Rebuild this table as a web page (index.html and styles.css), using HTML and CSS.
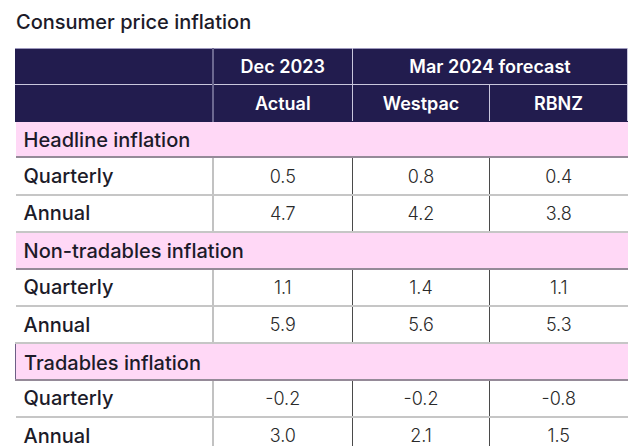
FILE: index.html
```html
<!DOCTYPE html>
<html>
<head>
<meta charset="utf-8">
<link rel="stylesheet" href="styles.css">
</head>
<body>
<div class="wrap">
  <h1 class="title">Consumer price inflation</h1>
  <table class="cpi">
    <colgroup>
      <col class="c-label"><col class="c-num"><col class="c-num"><col class="c-num">
    </colgroup>
    <thead>
      <tr class="h1row">
        <th class="blank"></th>
        <th class="first">Dec 2023</th>
        <th colspan="2" class="last">Mar 2024 forecast</th>
      </tr>
      <tr class="h2row">
        <th class="blank"></th>
        <th class="first">Actual</th>
        <th>Westpac</th>
        <th class="last">RBNZ</th>
      </tr>
    </thead>
    <tbody>
      <tr class="section"><td colspan="4">Headline inflation</td></tr>
      <tr class="data"><td class="label">Quarterly</td><td class="num first">0.5</td><td class="num">0.8</td><td class="num">0.4</td></tr>
      <tr class="data"><td class="label">Annual</td><td class="num first">4.7</td><td class="num">4.2</td><td class="num">3.8</td></tr>
      <tr class="section"><td colspan="4">Non-tradables inflation</td></tr>
      <tr class="data"><td class="label">Quarterly</td><td class="num first">1.1</td><td class="num">1.4</td><td class="num">1.1</td></tr>
      <tr class="data"><td class="label">Annual</td><td class="num first">5.9</td><td class="num">5.6</td><td class="num">5.3</td></tr>
      <tr class="section active"><td colspan="4">Tradables inflation</td></tr>
      <tr class="data"><td class="label">Quarterly</td><td class="num first">-0.2</td><td class="num">-0.2</td><td class="num">-0.8</td></tr>
      <tr class="data"><td class="label">Annual</td><td class="num first">3.0</td><td class="num">2.1</td><td class="num">1.5</td></tr>
    </tbody>
  </table>
</div>
</body>
</html>
```
FILE: styles.css
```css
html, body {
  margin: 0;
  padding: 0;
  background: #ffffff;
}
body {
  font-family: "Inter", "Liberation Sans", sans-serif;
  color: #1c1a2b;
  overflow: hidden;
}
.wrap {
  padding: 9px 4px 0 15px;
}
.title {
  margin: 0 0 0 1px;
  font-size: 20px;
  line-height: 26px;
  font-weight: 500;
  color: #1c1b29;
  height: 39px;
}
.cpi {
  width: 613px;
  border-collapse: collapse;
  table-layout: fixed;
}
.c-label { width: 197px; }
.c-num:nth-child(2) { width: 140px; }
.c-num:nth-child(3) { width: 137px; }
.cpi th, .cpi td {
  padding: 0;
}
thead th {
  background: #221c4e;
  color: #ffffff;
  font-size: 18px;
  font-weight: 600;
  text-align: center;
  border: 1px solid #c9c6dc;
  padding-top: 1px;
}
thead th.blank {
  border-left: 1px solid #221c4e;
  border-right: 2px solid #6c6890;
}
thead .h1row th { border-top: 1px solid #9d98bd; height: 35px; }
thead .h2row th { height: 36px; border-bottom: 1px solid #221c4e; }
.section td {
  background: #ffd8f6;
  font-size: 20px;
  font-weight: 500;
  color: #1c1b29;
  padding-left: 8px;
  padding-top: 2px;
  border-bottom: 2px solid #958a98;
  height: 32.4px;
}
.section.active td {
  border-top: 1px solid #6d5f86;
  border-left: 1px solid #6d5f86;
}
.data td {
  border-bottom: 2px solid #c6c6c6;
  height: 35.4px;
}
.data td.label {
  font-size: 20px;
  font-weight: 500;
  color: #1c1b29;
  padding-left: 8px;
  border-right: 2px solid #c2c2c2;
}
.data td.num {
  text-align: center;
  font-size: 18px;
  font-weight: 300;
  color: #2a2a2a;
  border-left: 1px solid #4a4a4a;
}
.data td.num.first { border-left: 2px solid #c2c2c2; }
```
